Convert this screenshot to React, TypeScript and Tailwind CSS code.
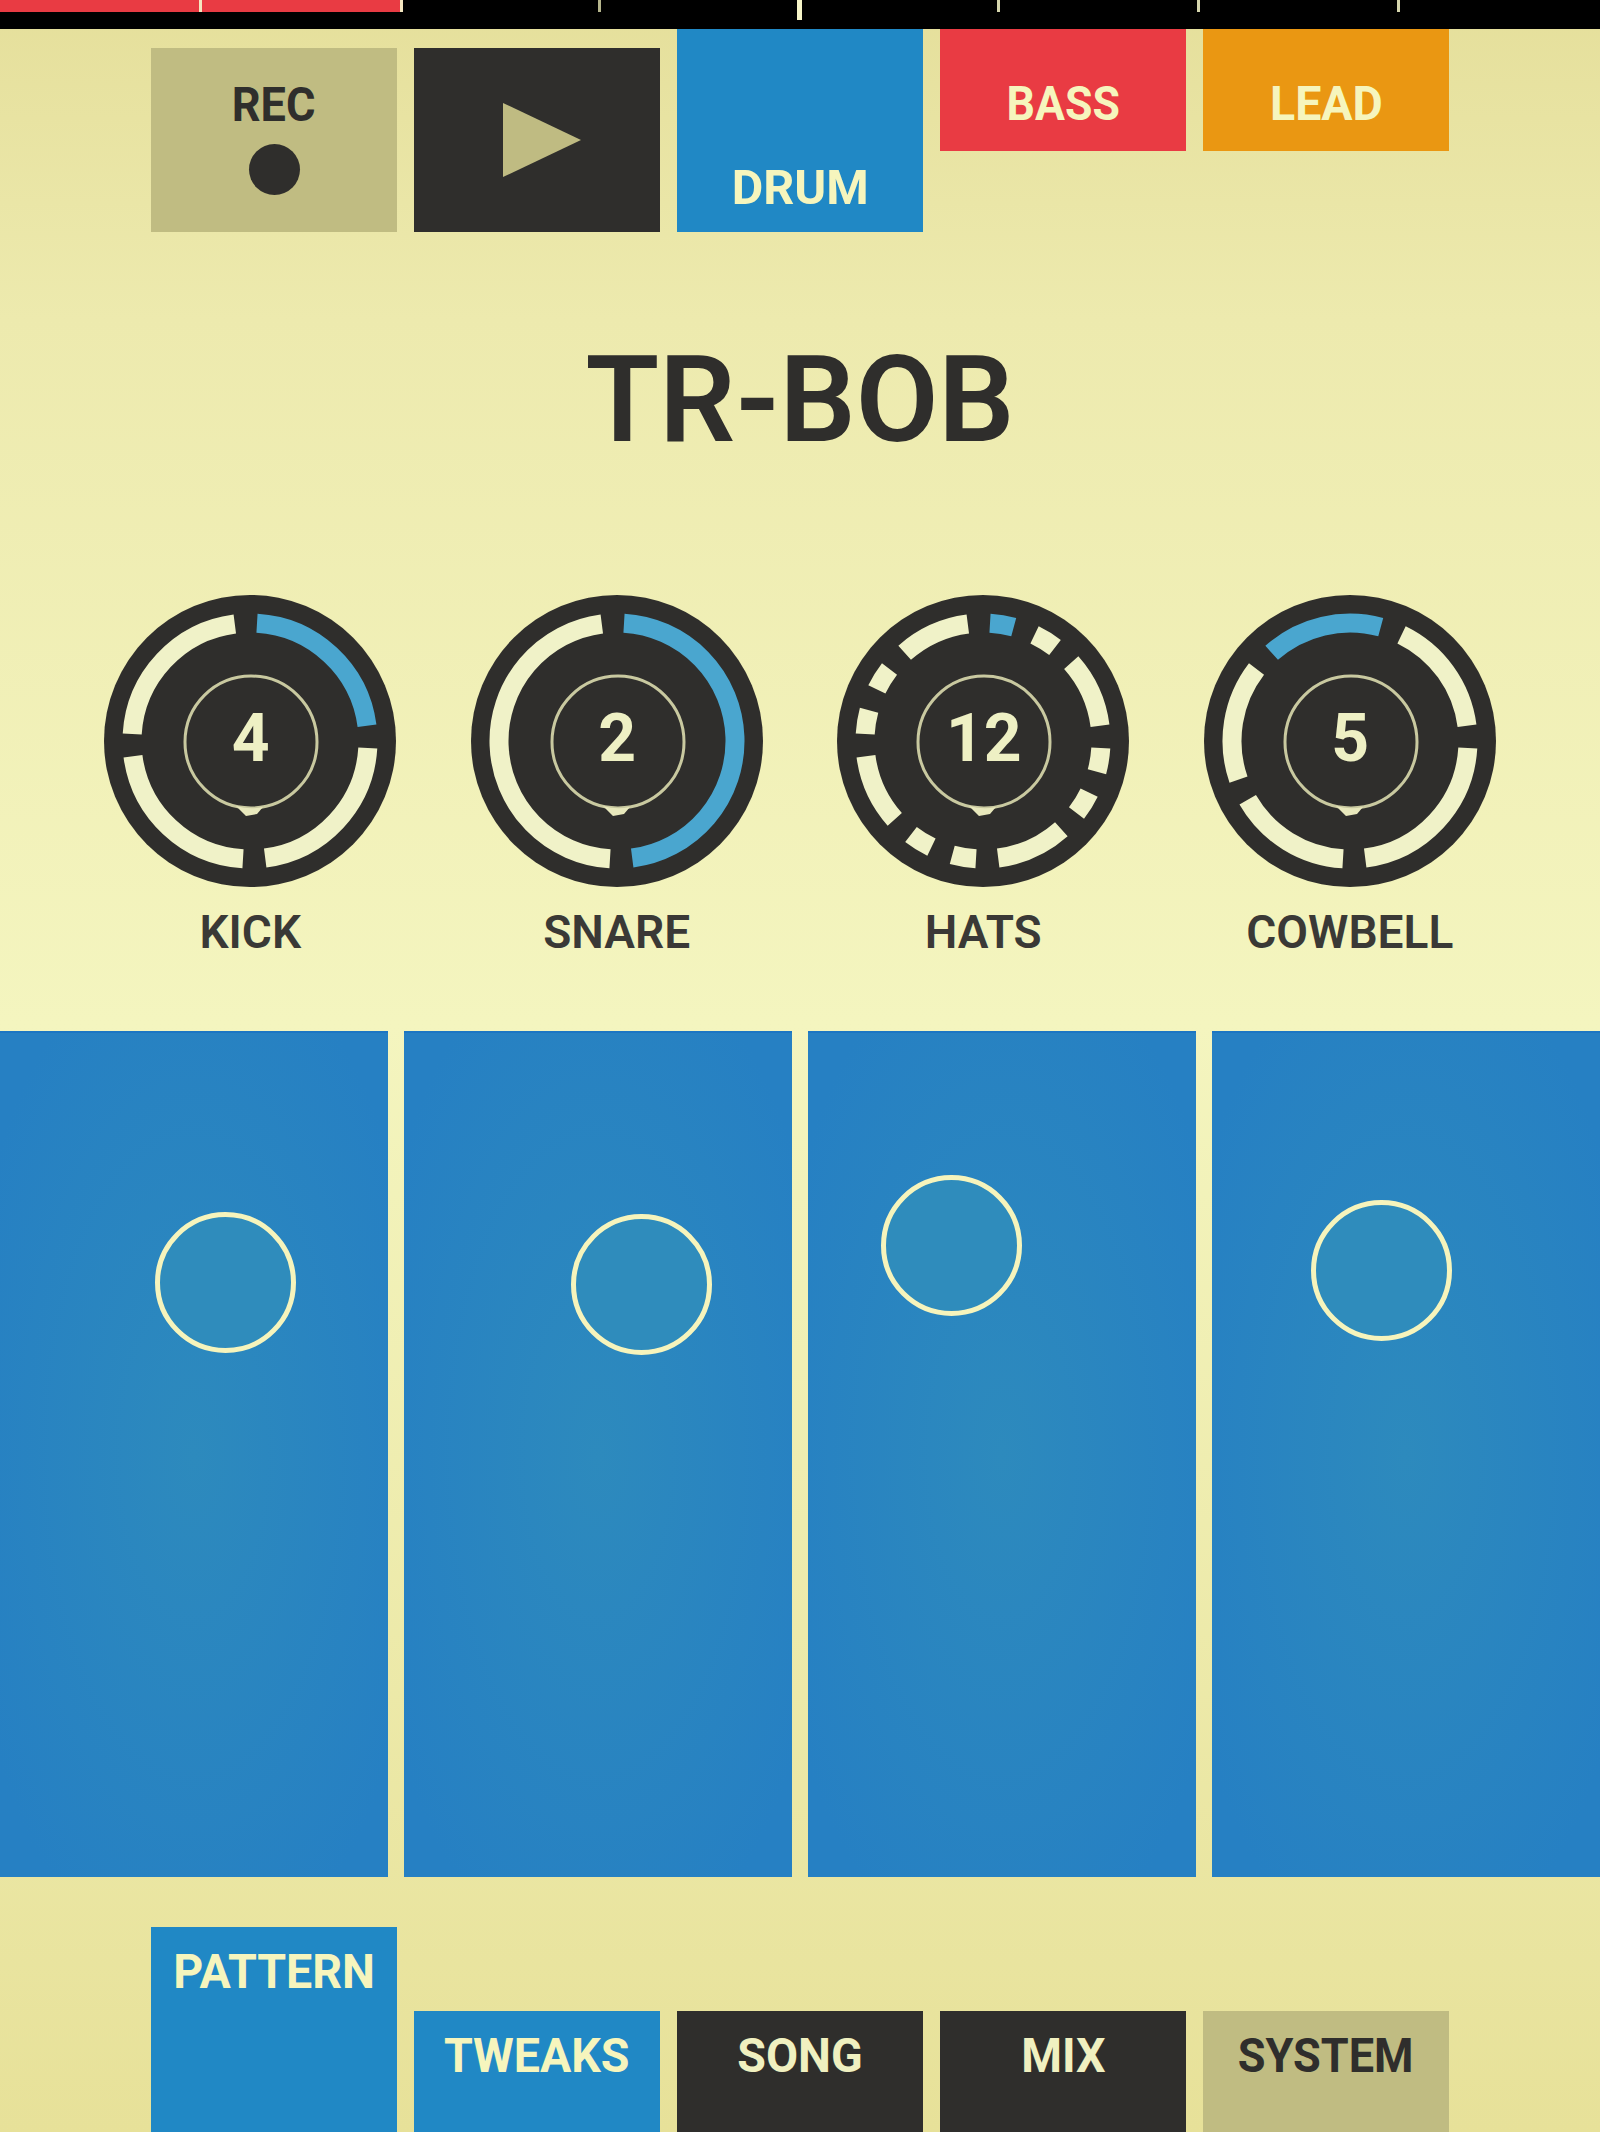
const DARK = "#2f2e2c";
const CREAM = "#f0f2c8";
const LIT = "#4aa6cf";

const fontClass = "font-['Roboto','Liberation_Sans',sans-serif]";

// one knob ring is 16 ticks, rotated a touch counter-clockwise
const polar = (r: number, deg: number) => {
  const a = ((deg - 90) * Math.PI) / 180;
  return `${(r * Math.cos(a)).toFixed(2)} ${(r * Math.sin(a)).toFixed(2)}`;
};

function arc(startTick: number, endTick: number) {
  const from = startTick * 22.5 - 2 + 5.4;
  const to = endTick * 22.5 - 2 - 5.4;
  const large = to - from > 180 ? 1 : 0;
  return `M ${polar(118, from)} A 118 118 0 ${large} 1 ${polar(118, to)}`;
}

const knobs = [
  { label: "KICK", value: "4", hits: [0, 4, 8, 12] },
  { label: "SNARE", value: "2", hits: [0, 8] },
  { label: "HATS", value: "12", hits: [0, 1, 2, 4, 5, 6, 8, 9, 10, 12, 13, 14] },
  { label: "COWBELL", value: "5", hits: [14, 1, 4, 8, 11] },
];

function Knob({ label, value, hits }: { label: string; value: string; hits: number[] }) {
  const sorted = [...hits].sort((a, b) => a - b);
  return (
    <div className="flex flex-col items-center">
      <div className="relative w-[292px] h-[292px]">
        <svg viewBox="-146 -146 292 292" className="block w-[292px] h-[292px]">
          <circle cx="0" cy="0" r="146" fill={DARK} />
          {hits.map((hit) => {
            const i = sorted.indexOf(hit);
            const next = i === sorted.length - 1 ? sorted[0] + 16 : sorted[i + 1];
            // the segment that crosses the top is the lit one on cowbell, first one otherwise
            const lit = hit === hits[0];
            return (
              <path
                key={hit}
                d={arc(hit, next)}
                fill="none"
                stroke={lit ? LIT : CREAM}
                strokeWidth="19"
              />
            );
          })}
          <circle cx="1" cy="1" r="66" fill="none" stroke="#c9c9a0" strokeWidth="3" />
          <path d="M -14 65 L -4 75 L 7 73 L 13 66 Q 0 69 -14 65 Z" fill="#e8e8bc" />
        </svg>
        <span className={`absolute inset-0 flex items-center justify-center pb-[4px] pl-[1px] text-[66px] leading-none font-bold text-[#eef0c4] ${fontClass}`}>
          {value}
        </span>
      </div>
      <div className={`mt-[18px] text-[46px] leading-[54px] font-semibold text-[#3a3936] ${fontClass}`}>
        {label}
      </div>
    </div>
  );
}

const pads = [
  { id: 1, spot: "left-[155px] top-[179px]" },
  { id: 2, spot: "left-[167px] top-[181px]" },
  { id: 3, spot: "left-[73px] top-[142px]" },
  { id: 4, spot: "left-[99px] top-[167px]" },
];

function Tab({ label, className, squeeze = "scale-x-[0.95]" }: { label: string; className: string; squeeze?: string }) {
  return (
    <div className={`w-[246px] flex justify-center text-[49px] leading-none font-bold ${className}`}>
      <span className={squeeze}>{label}</span>
    </div>
  );
}

export default function App() {
  return (
    <div className={`relative w-full h-[2132px] overflow-hidden flex flex-col bg-[linear-gradient(180deg,#e5df9b_0%,#edeaae_15%,#f4f5bf_48%,#e7e199_100%)] ${fontClass}`}>
      {/* Timeline */}
      <div className="relative h-[29px] shrink-0 bg-black">
        <div className="grid grid-cols-[202px_201px_198px_200px_199px_200px_200px_1fr] h-[12px]">
          <div className="bg-[#e93b43] border-r-[3px] border-[#f4e6c0]" />
          <div className="bg-[#e93b43] border-r-[3px] border-[#f4e6c0]" />
          <div className="border-r-[3px] border-[#b5b58c]" />
          <div />
          <div className="border-r-[3px] border-[#d5d5ac]" />
          <div className="border-r-[3px] border-[#d5d5ac]" />
          <div className="border-r-[3px] border-[#d5d5ac]" />
          <div />
        </div>
        <div className="absolute left-[797px] top-0 w-[5px] h-[20px] bg-[#f6f5c8]" />
      </div>

      {/* Transport and instrument tabs */}
      <div className="h-[203px] shrink-0 flex justify-center items-start gap-[17px]">
        <div className="w-[246px] h-[184px] mt-[19px] flex flex-col items-center pt-[29px] bg-[#c0bc82] text-[#2f2e2c]">
          <span className="text-[49px] leading-[56px] font-bold scale-x-[0.92]">REC</span>
          <span className="w-[51px] h-[51px] mt-[11px] rounded-full bg-[#2f2e2c]" />
        </div>
        <div className="w-[246px] h-[184px] mt-[19px] flex items-center justify-center bg-[#2f2e2c]">
          <svg width="78" height="74" viewBox="0 0 78 74" className="ml-[10px]">
            <path d="M0 0 L78 37 L0 74 Z" fill="#bfbb82" />
          </svg>
        </div>
        <Tab label="DRUM" squeeze="scale-x-[0.99]" className="h-[203px] items-end pb-[20px] bg-[#2088c5] text-[#f6f5bd]" />
        <Tab label="BASS" squeeze="scale-x-[0.91]" className="h-[122px] items-end pb-[23px] bg-[#e93b43] text-[#f6f5bd]" />
        <Tab label="LEAD" className="h-[122px] items-end pb-[23px] bg-[#ea9712] text-[#f6f5bd]" />
      </div>

      {/* Title */}
      <div className="h-[363px] shrink-0 pt-[96px] text-center text-[120px] leading-[144px] font-semibold text-[#2f2e2c]">
        TR-BOB
      </div>

      {/* Knobs */}
      <div className="h-[436px] shrink-0 px-[67px] grid grid-cols-4">
        {knobs.map((k) => (
          <Knob key={k.label} {...k} />
        ))}
      </div>

      {/* XY pads */}
      <div className="h-[846px] shrink-0 grid grid-cols-4 gap-4">
        {pads.map((p) => (
          <div
            key={p.id}
            className="relative bg-[radial-gradient(ellipse_at_center,#2d8abd_0%,#2680c3_88%)] border-t-[2px] border-[#1c76c3]"
          >
            <div className={`absolute w-[141px] h-[141px] rounded-full border-[5px] border-[#f6f4bc] bg-[#2f8cbc] ${p.spot}`} />
          </div>
        ))}
      </div>

      {/* Bottom tabs */}
      <div className="flex-1 flex justify-center items-end gap-[17px]">
        <Tab label="PATTERN" className="h-[205px] pt-[20px] bg-[#2088c5] text-[#f6f5bd]" />
        <Tab label="TWEAKS" className="h-[121px] pt-[20px] bg-[#2088c5] text-[#f6f5bd]" />
        <Tab label="SONG" className="h-[121px] pt-[20px] bg-[#2f2e2c] text-[#f0f0c0]" />
        <Tab label="MIX" className="h-[121px] pt-[20px] bg-[#2f2e2c] text-[#f0f0c0]" />
        <Tab label="SYSTEM" squeeze="scale-x-[0.92]" className="h-[121px] pt-[20px] bg-[#c0bc82] text-[#2f2e2c]" />
      </div>
    </div>
  );
}
